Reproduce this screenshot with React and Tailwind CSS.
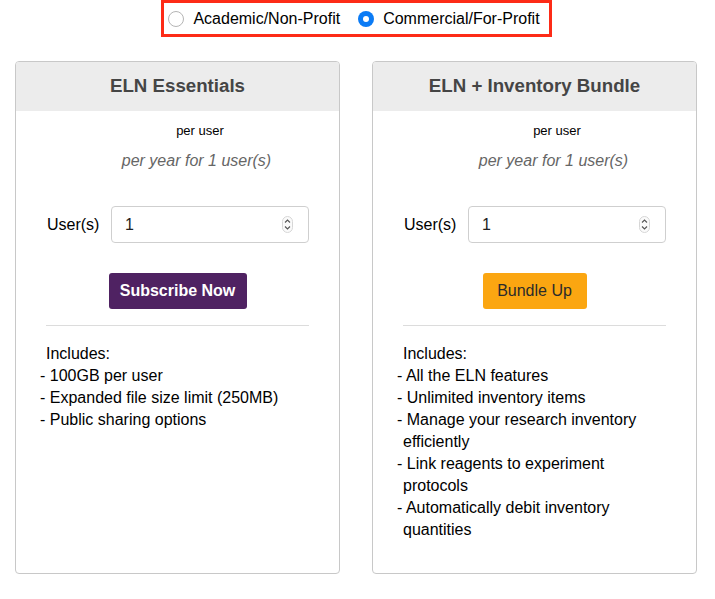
import React, { useState } from 'react';

const plans = [
    {
        title: 'ELN Essentials',
        button: 'Subscribe Now',
        buttonClass: 'bg-[#4f2262] text-white font-bold',
        buttonWidth: 'w-[138px]',
        features: ['100GB per user', 'Expanded file size limit (250MB)', 'Public sharing options'],
    },
    {
        title: 'ELN + Inventory Bundle',
        button: 'Bundle Up',
        buttonClass: 'bg-[#fba611] text-[#2b2b2b]',
        buttonWidth: 'w-[104px]',
        features: [
            'All the ELN features',
            'Unlimited inventory items',
            'Manage your research inventory efficiently',
            'Link reagents to experiment protocols',
            'Automatically debit inventory quantities',
        ],
    },
];

const Radio = ({ checked, label, onClick }) => {
    return (
        <label className="flex cursor-pointer items-center gap-[9px]" onClick={onClick}>
            {checked ? (
                <span className="flex h-[16px] w-[16px] items-center justify-center rounded-full bg-[#0b7bf5]">
                    <span className="h-[6px] w-[6px] rounded-full bg-white" />
                </span>
            ) : (
                <span className="h-[16px] w-[16px] rounded-full border border-[#b5b5b5] bg-white" />
            )}
            <span className="text-[16px] text-black">{label}</span>
        </label>
    );
};

const Spinner = () => (
    <svg width="11" height="17" viewBox="0 0 11 17" className="shrink-0">
        <rect x="0.5" y="0.5" width="10" height="16" rx="5" fill="#fafafa" stroke="#d6d6d6" />
        <path d="M3 6.5 L5.5 4 L8 6.5" fill="none" stroke="#555" strokeWidth="1.1" />
        <path d="M3 10.5 L5.5 13 L8 10.5" fill="none" stroke="#555" strokeWidth="1.1" />
    </svg>
);

const PlanCard = ({ plan }) => {
    const [users, setUsers] = useState('1');
    return (
        <div className="flex h-[513px] w-[325px] flex-col overflow-hidden rounded-[4px] border border-[#c8c8c8] bg-white">
            {/* Header */}
            <div className="flex h-[49px] shrink-0 items-center justify-center bg-[#ececec]">
                <h3 className="text-[18.7px] font-bold text-[#454545]">{plan.title}</h3>
            </div>

            {/* Price */}
            <div className="pt-[12px] text-center">
                <div className="pl-[45px] text-[13px] leading-[16px] text-black">per user</div>
                <div className="mt-[12px] pl-[38px] text-[16px] italic leading-[20px] text-[#666]">per year for 1 user(s)</div>
            </div>

            {/* Users input */}
            <div className="mt-[35px] flex items-center px-[30px]">
                <span className="w-[65px] pl-[1px] text-[16px] text-black">User(s)</span>
                <div className="flex h-[37px] flex-1 items-center rounded-[4px] border border-[#cfcfcf] pl-[13px] pr-[15px]">
                    <input
                        type="text"
                        value={users}
                        onChange={(e) => setUsers(e.target.value)}
                        className="w-full bg-transparent text-[16px] text-[#222] outline-none"
                    />
                    <Spinner />
                </div>
            </div>

            {/* Button */}
            <div className="mt-[30px] flex justify-center">
                <button type="button" className={`h-[36px] rounded-[3px] text-[16px] ${plan.buttonWidth} ${plan.buttonClass}`}>
                    {plan.button}
                </button>
            </div>

            <hr className="mx-[30px] mt-[16px] border-t border-[#dcdcdc]" />

            {/* Includes */}
            <div className="mt-[17px] pl-[24px] pr-[30px] text-[16px] leading-[22px] text-black">
                <div className="pl-[6px]">Includes:</div>
                <ul>
                    {plan.features.map((f, index) => (
                        <li key={index} className="pl-[6px] -indent-[6px]">
                            - {f}
                        </li>
                    ))}
                </ul>
            </div>
        </div>
    );
};

export default function App() {
    const [type, setType] = useState('commercial');
    return (
        <div className="min-h-[599px] w-full bg-white font-['Liberation_Sans',Arial,sans-serif]">
            {/* Account type */}
            <div className="flex justify-center">
                <div className="ml-[-2px] flex h-[37px] items-center gap-[18px] border-[3px] border-[#fd2b17] pl-[4px] pr-[9px]">
                    <Radio checked={type === 'academic'} label="Academic/Non-Profit" onClick={() => setType('academic')} />
                    <Radio checked={type === 'commercial'} label="Commercial/For-Profit" onClick={() => setType('commercial')} />
                </div>
            </div>

            {/* Plans */}
            <div className="mt-[24px] flex gap-[32px] pl-[15px]">
                {plans.map((plan, index) => (
                    <PlanCard key={index} plan={plan} />
                ))}
            </div>
        </div>
    );
}
